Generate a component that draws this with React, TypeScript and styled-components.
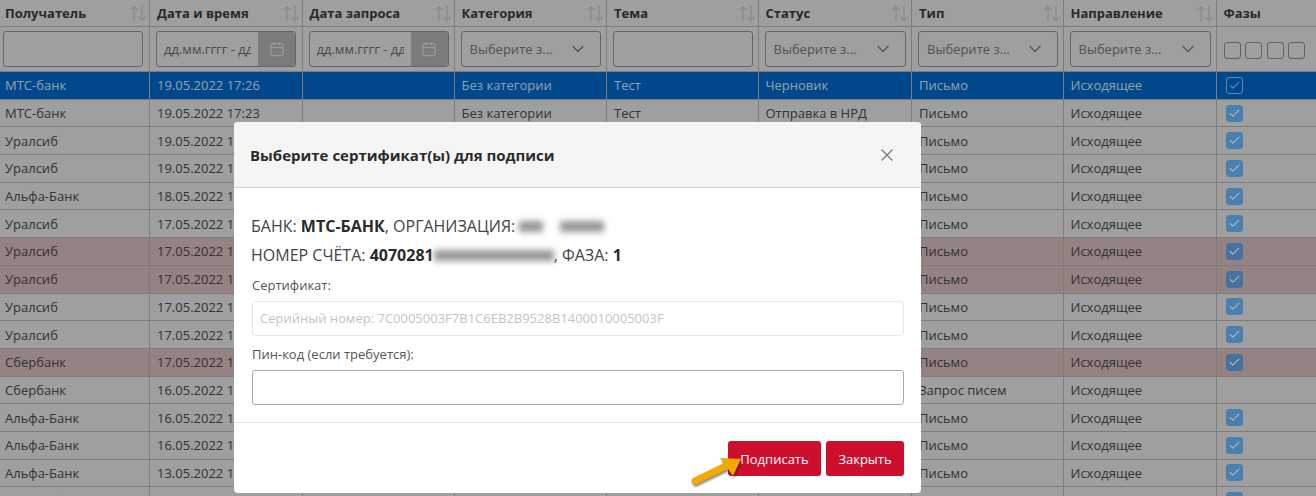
import React from 'react';
import styled, { createGlobalStyle } from 'styled-components';
import { Calendar, ChevronDown, X, Check } from 'lucide-react';

const GlobalStyle = createGlobalStyle`
  html, body {
    margin: 0;
    padding: 0;
    background: #e4e4e4;
    font-family: 'Open Sans', 'Liberation Sans', sans-serif;
    overflow: hidden;
  }
  * { box-sizing: border-box; }
`;

const COLUMNS = '150px 152.5px 152px 152.5px 151.5px 153.5px 151.5px 153px 1fr';
const LINE = '#b4b4b4';

const Page = styled.div`
  position: relative;
  width: 1316px;
  height: 496px;
  overflow: hidden;
  background: #e4e4e4;
`;

const Row = styled.div<{ $bg?: string; $height: number; $color?: string }>`
  display: grid;
  grid-template-columns: ${COLUMNS};
  height: ${(p) => p.$height}px;
  background: ${(p) => p.$bg || 'transparent'};
  color: ${(p) => p.$color || '#4a4a4a'};
  border-bottom: 1px solid ${LINE};
`;

const Cell = styled.div`
  display: flex;
  align-items: center;
  padding: 0 5px 0 7px;
  font-size: 13px;
  white-space: nowrap;
  overflow: hidden;
  border-right: 1px solid ${LINE};
  &:first-child { padding-left: 5px; }
  &:last-child { border-right: none; }
`;

const HeadCell = styled(Cell)`
  justify-content: space-between;
  font-weight: 700;
  color: #3c3c3c;
  padding-right: 2px;
`;

const FilterCell = styled(Cell)`
  padding: 4px 5px 0 6px;
  align-items: flex-start;
  &:first-child { padding-left: 3px; }
`;

const TextFilter = styled.div`
  width: 140px;
  height: 36px;
  border: 1px solid #909090;
  border-radius: 3px;
`;

const DateFilter = styled.div`
  display: flex;
  width: 140px;
  height: 36px;
  border: 1px solid #909090;
  border-radius: 3px;
  overflow: hidden;
`;

const DateText = styled.div`
  flex: 1;
  min-width: 0;
  margin: 0 7px;
  font-size: 13px;
  line-height: 34px;
  color: #6b6b6b;
  overflow: hidden;
`;

const DateButton = styled.div`
  flex: none;
  width: 37px;
  display: flex;
  align-items: center;
  justify-content: center;
  background: #b2b2b2;
  color: #e4e4e4;
`;

const SelectFilter = styled.div`
  display: flex;
  align-items: center;
  justify-content: space-between;
  width: 141px;
  height: 36px;
  padding: 0 12px 0 8px;
  border: 1px solid #909090;
  border-radius: 3px;
  font-size: 13px;
  color: #777;
`;

const PhaseFilter = styled.div`
  display: flex;
  gap: 4.5px;
  margin: 11px 0 0 1px;
`;

const PhaseBox = styled.div`
  width: 17px;
  height: 17px;
  border: 1px solid #8c8c8c;
  border-radius: 3px;
`;

const PhaseCheck = styled.div<{ $tone?: Entry['tone'] }>`
  display: flex;
  align-items: center;
  justify-content: center;
  width: 17px;
  height: 17px;
  margin-left: 2px;
  border-radius: 3px;
  color: ${(p) => (p.$tone === 'selected' ? '#86c4ff' : '#fff')};
  border: 1px solid ${(p) => (p.$tone === 'selected' ? '#86c4ff' : p.$tone === 'alert' ? '#64a4e4' : '#6bb8fc')};
  background: ${(p) => (p.$tone === 'selected' ? 'transparent' : p.$tone === 'alert' ? '#64a4e4' : '#6bb8fc')};
`;

const Overlay = styled.div`
  position: absolute;
  inset: 0;
  background: rgba(0, 0, 0, 0.3);
`;

const Modal = styled.div`
  position: absolute;
  left: 234px;
  top: 122px;
  width: 687px;
  height: 371px;
  display: flex;
  flex-direction: column;
  background: #fff;
  border-radius: 4px;
  overflow: hidden;
  color: #333;
`;

const ModalHeader = styled.div`
  display: flex;
  align-items: center;
  justify-content: space-between;
  height: 66px;
  padding: 0 24px 0 16px;
  background: #f5f5f5;
  border-bottom: 1px solid #d8d8d8;
`;

const ModalTitle = styled.div`
  font-size: 15px;
  font-weight: 700;
  color: #2b2b2b;
`;

const CloseIcon = styled(X)`
  color: #777;
`;

const ModalBody = styled.div`
  flex: 1;
  padding: 28px 17px 0 18px;
  border-bottom: 1px solid #e6e6e6;
`;

const InfoLine = styled.div`
  font-size: 16px;
  line-height: 20px;
  height: 29px;
  margin-left: -1px;
  color: #444;
  white-space: nowrap;
  b { font-weight: 700; color: #2b2b2b; }
`;

const Blurred = styled.span<{ $width: number; $gap?: number }>`
  display: inline-block;
  width: ${(p) => p.$width}px;
  height: 11px;
  margin-left: ${(p) => p.$gap || 0}px;
  vertical-align: 0;
  background: #969696;
  filter: blur(3px);
`;

const FieldLabel = styled.div`
  font-size: 13px;
  line-height: 16px;
  color: #555;
  margin: 10px 0 8px;
  ${InfoLine} + & { margin-top: 3px; }
`;

const SerialField = styled.div`
  height: 35px;
  padding-left: 7px;
  font-size: 13px;
  line-height: 33px;
  color: #c4c4c4;
  border: 1px solid #e8e8e8;
  border-radius: 3px;
`;

const PinInput = styled.div`
  height: 35px;
  border: 1px solid #aaa;
  border-radius: 3px;
`;

const ModalFooter = styled.div`
  display: flex;
  justify-content: flex-end;
  gap: 5px;
  height: 70px;
  padding: 18px 17px 0 0;
`;

const Button = styled.div<{ $width: number }>`
  display: flex;
  align-items: center;
  justify-content: center;
  width: ${(p) => p.$width}px;
  height: 35px;
  background: #ce0e2d;
  color: #fff;
  font-size: 13px;
  border-radius: 3px;
`;

const Pointer = styled.svg`
  position: absolute;
  left: 688px;
  top: 452px;
  filter: drop-shadow(1px 2px 1px rgba(0, 0, 0, 0.45));
`;

const SortIcon = () => (
  <svg width="18" height="17" viewBox="0 0 18 17" fill="none" stroke="#c4c4c4" strokeWidth="1.2">
    <path d="M5 16V1.5M1.5 5L5 1.5 8.5 5" />
    <path d="M13 1v14.5M9.5 12l3.5 3.5 3.5-3.5" />
  </svg>
);

const heads: [string, boolean][] = [
  ['Получатель', true],
  ['Дата и время', true],
  ['Дата запроса', true],
  ['Категория', true],
  ['Тема', true],
  ['Статус', true],
  ['Тип', true],
  ['Направление', true],
  ['Фазы', false],
];

type Entry = {
  to: string;
  date: string;
  status: string;
  type?: string;
  tone?: 'selected' | 'alert';
  noPhase?: boolean;
};

const rows: Entry[] = [
  { to: 'МТС-банк', date: '19.05.2022 17:26', status: 'Черновик', tone: 'selected' },
  { to: 'МТС-банк', date: '19.05.2022 17:23', status: 'Отправка в НРД' },
  { to: 'Уралсиб', date: '19.05.2022 16:40', status: 'Отправлено' },
  { to: 'Уралсиб', date: '19.05.2022 16:38', status: 'Отправлено' },
  { to: 'Альфа-Банк', date: '18.05.2022 12:15', status: 'Отправлено' },
  { to: 'Уралсиб', date: '17.05.2022 18:02', status: 'Отправлено' },
  { to: 'Уралсиб', date: '17.05.2022 17:51', status: 'Ошибка', tone: 'alert' },
  { to: 'Уралсиб', date: '17.05.2022 17:44', status: 'Ошибка', tone: 'alert' },
  { to: 'Уралсиб', date: '17.05.2022 17:30', status: 'Отправлено' },
  { to: 'Уралсиб', date: '17.05.2022 17:12', status: 'Отправлено' },
  { to: 'Сбербанк', date: '17.05.2022 16:20', status: 'Ошибка', tone: 'alert' },
  { to: 'Сбербанк', date: '16.05.2022 15:47', status: 'Отправлено', type: 'Запрос писем', noPhase: true },
  { to: 'Альфа-Банк', date: '16.05.2022 14:33', status: 'Отправлено' },
  { to: 'Альфа-Банк', date: '16.05.2022 14:10', status: 'Отправлено' },
  { to: 'Альфа-Банк', date: '13.05.2022 11:05', status: 'Отправлено' },
  { to: 'Уралсиб', date: '13.05.2022 10:21', status: 'Отправлено' },
];

const rowBg = (tone?: Entry['tone']) =>
  tone === 'selected' ? '#0068c8' : tone === 'alert' ? '#d6baba' : undefined;

const selectFilter = (
  <SelectFilter>
    Выберите з...
    <ChevronDown size={20} strokeWidth={1.5} />
  </SelectFilter>
);

const dateFilter = (
  <DateFilter>
    <DateText>дд.мм.гггг - дд.мм.гггг</DateText>
    <DateButton>
      <Calendar size={16} strokeWidth={1.5} />
    </DateButton>
  </DateFilter>
);

const App: React.FC = () => {
  return (
    <Page>
      <GlobalStyle />
      <Row $height={27}>
        {heads.map(([title, sortable]) => (
          <HeadCell key={title}>
            {title}
            {sortable && <SortIcon />}
          </HeadCell>
        ))}
      </Row>
      <Row $height={45}>
        <FilterCell><TextFilter /></FilterCell>
        <FilterCell>{dateFilter}</FilterCell>
        <FilterCell>{dateFilter}</FilterCell>
        <FilterCell>{selectFilter}</FilterCell>
        <FilterCell><TextFilter /></FilterCell>
        <FilterCell>{selectFilter}</FilterCell>
        <FilterCell>{selectFilter}</FilterCell>
        <FilterCell>{selectFilter}</FilterCell>
        <FilterCell>
          <PhaseFilter>
            <PhaseBox /><PhaseBox /><PhaseBox /><PhaseBox />
          </PhaseFilter>
        </FilterCell>
      </Row>
      {rows.map((r, i) => (
        <Row
          key={i}
          $height={27.7}
          $bg={rowBg(r.tone)}
          $color={r.tone === 'selected' ? '#d4e4f4' : undefined}
        >
          <Cell>{r.to}</Cell>
          <Cell>{r.date}</Cell>
          <Cell />
          <Cell>Без категории</Cell>
          <Cell>Тест</Cell>
          <Cell>{r.status}</Cell>
          <Cell>{r.type || 'Письмо'}</Cell>
          <Cell>Исходящее</Cell>
          <Cell>
            {!r.noPhase && (
              <PhaseCheck $tone={r.tone}>
                <Check size={13} strokeWidth={2} />
              </PhaseCheck>
            )}
          </Cell>
        </Row>
      ))}
      <Overlay />
      <Modal>
        <ModalHeader>
          <ModalTitle>Выберите сертификат(ы) для подписи</ModalTitle>
          <CloseIcon size={20} strokeWidth={1.5} />
        </ModalHeader>
        <ModalBody>
          <InfoLine>
            БАНК: <b>МТС-БАНК</b>, ОРГАНИЗАЦИЯ: <Blurred $width={24} /><Blurred $width={44} $gap={17} />
          </InfoLine>
          <InfoLine>
            НОМЕР СЧЁТА: <b>4070281</b><Blurred $width={120} />, ФАЗА: <b>1</b>
          </InfoLine>
          <FieldLabel>Сертификат:</FieldLabel>
          <SerialField>Серийный номер: 7C0005003F7B1C6EB2B9528B1400010005003F</SerialField>
          <FieldLabel>Пин-код (если требуется):</FieldLabel>
          <PinInput />
        </ModalBody>
        <ModalFooter>
          <Button $width={93}>Подписать</Button>
          <Button $width={78}>Закрыть</Button>
        </ModalFooter>
      </Modal>
      <Pointer width="60" height="36" viewBox="0 0 60 36">
        <path d="M7 29L38 14" stroke="#f2a900" strokeWidth="7" strokeLinecap="round" />
        <path d="M32 6L53 7 45 24Z" fill="#f2a900" />
      </Pointer>
    </Page>
  );
};

export default App;
